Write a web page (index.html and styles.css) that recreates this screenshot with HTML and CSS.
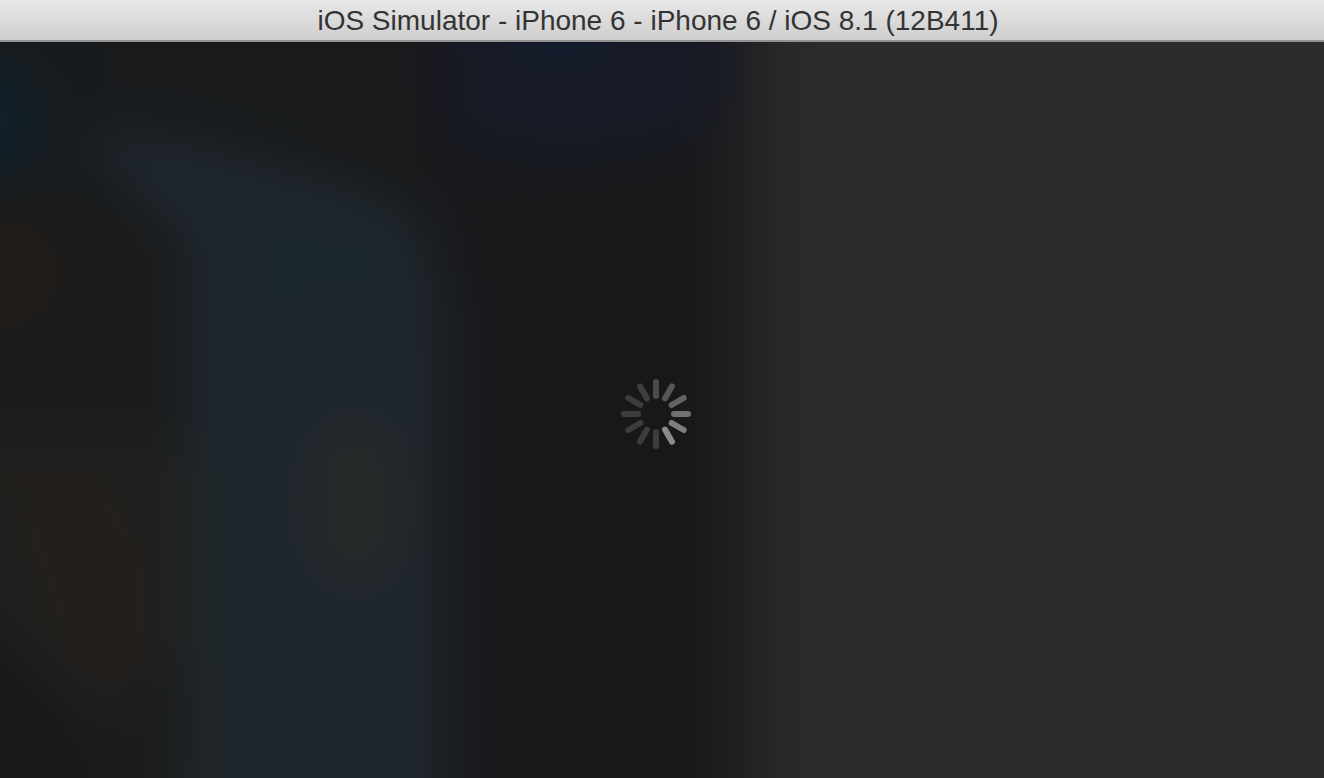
FILE: index.html
```html
<!DOCTYPE html>
<html lang="en">
<head>
<meta charset="utf-8">
<title>iOS Simulator</title>
<link rel="stylesheet" href="styles.css">
</head>
<body>
<div class="window">
  <header class="titlebar">
    <h1 class="title">iOS Simulator - iPhone 6 - iPhone 6 / iOS 8.1 (12B411)</h1>
  </header>
  <main class="screen">
    <svg class="backdrop" viewBox="0 0 1324 736" preserveAspectRatio="none" aria-hidden="true">
      <defs>
        <linearGradient id="base" x1="0" x2="1324" y1="0" y2="0" gradientUnits="userSpaceOnUse">
          <stop offset="0" stop-color="#171a1c"/>
          <stop offset="0.3" stop-color="#191a1b"/>
          <stop offset="0.37" stop-color="#18181b"/>
          <stop offset="0.43" stop-color="#181819"/>
          <stop offset="0.46" stop-color="#181818"/>
          <stop offset="0.53" stop-color="#181818"/>
          <stop offset="0.545" stop-color="#1c1c1c"/>
          <stop offset="0.57" stop-color="#242424"/>
          <stop offset="0.59" stop-color="#292929"/>
          <stop offset="0.61" stop-color="#2b2b2b"/>
          <stop offset="1" stop-color="#2b2b2b"/>
        </linearGradient>
        <filter id="soft" filterUnits="userSpaceOnUse" x="-200" y="-200" width="1724" height="1136" color-interpolation-filters="sRGB"><feGaussianBlur stdDeviation="26"/></filter>
      </defs>
      <rect width="1324" height="736" fill="url(#base)"/>
      <g filter="url(#soft)">
        <rect x="-200" y="-200" width="1724" height="1136" fill="url(#base)"/>
        <path d="M-200 170H110L165 230V936H-200Z" fill="#1d1c1b"/>
        <path d="M-200 400H180V610L90 700L-20 560H-200Z" fill="#21201e"/>
        <path d="M60 85L190 95L350 140L420 175L445 260V936H185V200Z" fill="#1e262d"/>
        <path d="M190 420H240V936H180Z" fill="#20272a"/>
        <path d="M245 180H390V260H290V350H245Z" fill="#1d282d"/>
        <ellipse cx="355" cy="460" rx="55" ry="90" fill="#26292a"/>
        <ellipse cx="-10" cy="78" rx="50" ry="65" fill="#12202a"/>
        <path d="M425 -200H735V70L690 115L570 135L440 105Z" fill="#171924"/>
        <ellipse cx="560" cy="-20" rx="75" ry="55" fill="#141c2b"/>
        <ellipse cx="5" cy="220" rx="40" ry="60" fill="#221c18"/>
        <path d="M20 440L90 440L140 530V640L80 610Z" fill="#251f1c"/>
        <path d="M-200 580H-20L90 680V936H-200Z" fill="#191818"/>
      </g>
    </svg>
    <svg class="spinner" viewBox="-35 -35 70 70" role="img" aria-label="Loading">
      <g class="spokes">
        <path d="M0-18V-32" stroke="#4b4b4b"/>
        <path d="M0-18V-32" stroke="#555" transform="rotate(30)"/>
        <path d="M0-18V-32" stroke="#636363" transform="rotate(60)"/>
        <path d="M0-18V-32" stroke="#727272" transform="rotate(90)"/>
        <path d="M0-18V-32" stroke="#7e7e7e" transform="rotate(120)"/>
        <path d="M0-18V-32" stroke="#8b8b8b" transform="rotate(150)"/>
        <path d="M0-18V-32" stroke="#3c3c3c" transform="rotate(180)"/>
        <path d="M0-18V-32" stroke="#3c3c3c" transform="rotate(210)"/>
        <path d="M0-18V-32" stroke="#3c3c3c" transform="rotate(240)"/>
        <path d="M0-18V-32" stroke="#3c3c3c" transform="rotate(270)"/>
        <path d="M0-18V-32" stroke="#3c3c3c" transform="rotate(300)"/>
        <path d="M0-18V-32" stroke="#3e3e3e" transform="rotate(330)"/>
      </g>
    </svg>
  </main>
</div>
</body>
</html>
```
FILE: styles.css
```css
* {
  box-sizing: border-box;
}

body {
  margin: 0;
  background: #181818;
  font-family: "Liberation Sans", Arial, sans-serif;
}

.window {
  display: flex;
  flex-direction: column;
  min-height: 100vh;
}

.titlebar {
  display: flex;
  justify-content: center;
  padding: 6px 8px 4px 0;
  background: linear-gradient(#e8e8e8, #cecece);
  border-bottom: 2px solid #929292;
}

.title {
  margin: 0;
  color: #333;
  font-size: 28px;
  font-weight: 400;
  line-height: 30px;
  white-space: nowrap;
}

.screen {
  position: relative;
  display: flex;
  flex: 1;
  align-items: center;
  justify-content: center;
  padding: 8px 12px 0 0;
  overflow: hidden;
}

.backdrop {
  position: absolute;
  inset: 0;
  width: 100%;
  height: 100%;
}

.spinner {
  position: relative;
  width: 70px;
  height: 70px;
}

.spokes {
  fill: none;
  stroke-width: 6px;
  stroke-linecap: round;
}
```
